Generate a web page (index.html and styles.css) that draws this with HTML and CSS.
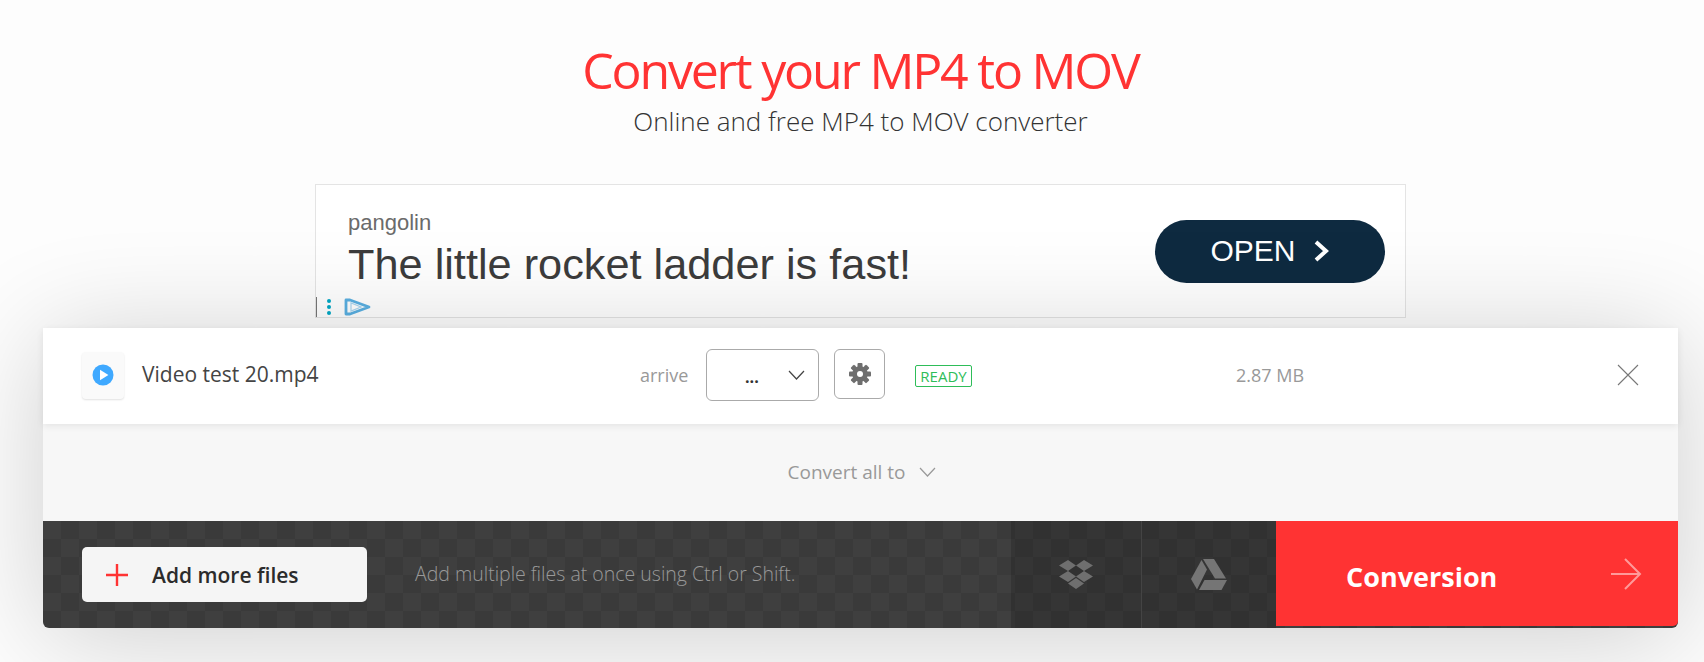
FILE: index.html
```html
<!doctype html>
<html>
  <head>
    <meta charset="UTF-8" />
    <title>Convert your MP4 to MOV</title>
    <link rel="stylesheet" href="styles.css">
  </head>
  <body>
    <div class="page">
      <div class="header">
        <h1>Convert your MP4 to MOV</h1>
        <p>Online and free MP4 to MOV converter</p>
      </div>

      <div class="ad">
        <div class="ad-text">
          <div class="ad-brand">pangolin</div>
          <div class="ad-headline">The little rocket ladder is fast!</div>
        </div>
        <div class="ad-button">
          OPEN
          <svg width="18" height="24" viewBox="0 0 18 24">
            <path d="M3 3l10 9-10 9" transform="translate(1 0)" fill="none" stroke="#fff" stroke-width="4" />
          </svg>
        </div>
        <div class="ad-marker">
          <span class="ad-bar"></span>
          <span class="ad-dots"><i></i><i></i><i></i></span>
          <svg width="28" height="18" viewBox="0 0 28 18">
            <path d="M2 2h4l19 7-19 7H2z" fill="none" stroke="#5ab0e2" stroke-width="2.8" stroke-linejoin="round" />
            <path d="M7 5v8l10-4z" fill="none" stroke="#a9d6f0" stroke-width="1.2" />
          </svg>
        </div>
      </div>

      <div class="panel">
        <div class="file-row">
          <div class="file-info">
            <div class="file-icon">
              <svg width="22" height="22" viewBox="0 0 22 22">
                <circle cx="11" cy="11" r="10.5" fill="#3fa9ff" />
                <path d="M8 5.8v10.4l8.4-5.2z" fill="#fff" />
              </svg>
            </div>
            <span class="file-name">Video test 20.mp4</span>
          </div>
          <span class="file-arrive">arrive</span>
          <div class="select-box">
            <span>...</span>
            <svg width="17" height="10" viewBox="0 0 17 10">
              <path d="M1 1l7.500 8 7.500-8" fill="none" stroke="#444" stroke-width="1.2" />
            </svg>
          </div>
          <div class="gear-btn">
            <svg width="22" height="22" viewBox="0 0 22 22">
              <g fill="#6e6e6e">
                <rect x="8.500" y="0" width="5" height="22" rx="1" />
                <rect x="8.500" y="0" width="5" height="22" rx="1" transform="rotate(45 11 11)" />
                <rect x="8.500" y="0" width="5" height="22" rx="1" transform="rotate(90 11 11)" />
                <rect x="8.500" y="0" width="5" height="22" rx="1" transform="rotate(135 11 11)" />
              </g>
              <circle cx="11" cy="11" r="6" fill="none" stroke="#6e6e6e" stroke-width="3.500" />
              <circle cx="11" cy="11" r="3" fill="#fff" />
            </svg>
          </div>
          <span class="badge">READY</span>
          <span class="file-size">2.87 MB</span>
          <svg class="file-close" width="22" height="22" viewBox="0 0 22 22">
            <path d="M1 1l20 20M21 1L1 21" stroke="#777" stroke-width="1.1" />
          </svg>
        </div>

        <div class="convert-all">
          <span>Convert all to</span>
          <svg width="17" height="10" viewBox="0 0 17 10">
            <path d="M1 1l7.500 8 7.500-8" fill="none" stroke="#999" stroke-width="1.2" />
          </svg>
        </div>

        <div class="action-bar">
          <div class="add-btn">
            <svg width="22" height="22" viewBox="0 0 22 22">
              <path d="M11 0v22M0 11h22" stroke="#ff3333" stroke-width="2.400" />
            </svg>
            <span>Add more files</span>
          </div>
          <span class="hint">Add multiple files at once using Ctrl or Shift.</span>
          <div class="cloud cloud-dropbox">
            <svg width="34" height="29" viewBox="0 0 34 29" fill="#6f6f6f">
              <path d="M9 0l8 5.500-8 5.500-9-5.500zM25 0l9 5.500-9 5.500-8-5.500zM9 11l8 5.500-8 5.500-9-5.500zM25 11l9 5.500-9 5.500-8-5.500zM17 18l8 5.500-8 5.500-8-5.500z" />
            </svg>
          </div>
          <div class="cloud cloud-drive">
            <svg width="36" height="31" viewBox="0 0 36 31" fill="#757575">
              <path d="M12 0h11l12 19.500H24z" />
              <path d="M10.500 1l5.500 9.500L6 30.500 0 20z" />
              <path d="M13.500 21H36l-5.500 10H8z" />
            </svg>
          </div>
          <div class="convert-btn">
            <span>Conversion</span>
            <svg width="31" height="32" viewBox="0 0 31 32">
              <path d="M0 16h29M14 1l15 15-15 15" fill="none" stroke="#ff9a9a" stroke-width="2" />
            </svg>
          </div>
        </div>
      </div>
    </div>
  </body>
</html>
```

FILE: styles.css
```css
body,
html {
  height: 100%;
  margin: 0;
}

body {
  font-family: "Open Sans", sans-serif;
  background-color: #fdfdfd;
  color: #333;
  overflow: hidden;
}

.page {
  padding: 0 26px 0 43px;
}

.header {
  height: 184px;
  text-align: center;
  box-sizing: border-box;
  padding-top: 37px;
}

.header h1 {
  margin: 0;
  font-size: 50px;
  font-weight: 400;
  line-height: 66px;
  letter-spacing: -2.2px;
  color: #ff3333;
}

.header p {
  margin: 0;
  font-size: 26px;
  font-weight: 300;
  line-height: 36px;
  color: #333;
}

/* Ad block */
.ad {
  position: relative;
  width: 1091px;
  height: 134px;
  margin: 0 auto 10px;
  box-sizing: border-box;
  border: 1px solid #e4e4e4;
  background: #fff;
  display: flex;
  align-items: center;
  justify-content: space-between;
  padding: 0 20px 0 32px;
  font-family: "Liberation Sans", Arial, sans-serif;
}

.ad-brand {
  font-size: 22px;
  line-height: 26px;
  color: #6b6b6b;
}

.ad-headline {
  font-size: 43.3px;
  line-height: 56px;
  color: #3c3c3c;
}

.ad-button {
  width: 230px;
  height: 63px;
  border-radius: 32px;
  background: #0e2a40;
  color: #fff;
  font-size: 30px;
  display: flex;
  align-items: center;
  justify-content: center;
  gap: 16px;
}

.ad-marker {
  position: absolute;
  left: 0;
  bottom: 0;
  height: 20px;
  display: flex;
  align-items: center;
}

.ad-bar {
  width: 1px;
  height: 20px;
  background: #777;
}

.ad-dots {
  display: flex;
  flex-direction: column;
  gap: 2px;
  margin: 0 13px 0 10px;
}

.ad-dots i {
  display: block;
  width: 4px;
  height: 4px;
  border-radius: 50%;
  background: #00a8c6;
}

/* Converter panel */
.panel {
  position: relative;
  border-radius: 0 0 6px 6px;
  background: #f7f7f7;
  box-shadow: 0 10px 110px rgba(0, 0, 0, 0.19);
}

.file-row {
  position: relative;
  height: 96px;
  padding: 0 39px 0 39px;
  display: flex;
  align-items: center;
  background: #fff;
  box-shadow: 0 2px 7px rgba(0, 0, 0, 0.08);
}

.file-info {
  width: 558px;
  display: flex;
  align-items: center;
  gap: 18px;
  padding-bottom: 2px;
}

.file-icon {
  width: 42px;
  height: 47px;
  border-radius: 4px;
  background: #fafafa;
  box-shadow: 0 1px 2px rgba(0, 0, 0, 0.12);
  display: flex;
  align-items: center;
  justify-content: center;
}

.file-name {
  margin-bottom: 3px;
  font-size: 21px;
  color: #444;
}

.file-arrive {
  width: 48px;
  margin-right: 18px;
  margin-bottom: 2px;
  font-size: 18px;
  color: #999;
}

.select-box {
  width: 113px;
  height: 52px;
  margin-bottom: 2px;
  box-sizing: border-box;
  border: 1px solid #aaa;
  border-radius: 6px;
  margin-right: 15px;
  padding: 0 13px 0 38px;
  display: flex;
  align-items: center;
  justify-content: space-between;
  font-size: 16px;
  font-weight: 700;
  color: #333;
}

.select-box span {
  padding-top: 4px;
}

.gear-btn {
  width: 51px;
  height: 50px;
  margin-bottom: 4px;
  box-sizing: border-box;
  border: 1px solid #aaa;
  border-radius: 6px;
  margin-right: 30px;
  display: flex;
  align-items: center;
  justify-content: center;
}

.badge {
  width: 57px;
  height: 22px;
  box-sizing: border-box;
  border: 1px solid #2ebd59;
  border-radius: 2px;
  margin-right: 264px;
  font-size: 15px;
  line-height: 20px;
  text-align: center;
  color: #2ebd59;
}

.file-size {
  margin-bottom: 2px;
  font-size: 18px;
  color: #999;
}

.file-close {
  margin-left: auto;
  margin-bottom: 2px;
}

.convert-all {
  height: 95px;
  padding-bottom: 2px;
  display: flex;
  align-items: center;
  justify-content: center;
  gap: 14px;
  padding-left: 3px;
  font-size: 19px;
  color: #999;
}

.action-bar {
  height: 107px;
  border-radius: 0 0 6px 6px;
  padding-left: 39px;
  display: flex;
  align-items: flex-start;
  background-color: #3d3d3d;
  background-image: repeating-conic-gradient(#3a3a3a 0 25%, #3f3f3f 0 50%);
  background-size: 36px 36px;
  color: #fff;
}

.add-btn {
  width: 285px;
  height: 55px;
  margin-top: 26px;
  box-sizing: border-box;
  padding-left: 24px;
  border-radius: 5px;
  background: #f5f5f5;
  display: flex;
  align-items: center;
  gap: 24px;
  font-size: 21px;
  font-weight: 600;
  color: #2b2b2b;
}

.hint {
  margin: 40px 0 0 48px;
  width: 596px;
  font-size: 19.5px;
  font-weight: 300;
  line-height: 26px;
  color: #999;
}

.cloud {
  height: 107px;
  background: rgba(0, 0, 0, 0.15);
  display: flex;
  align-items: center;
  justify-content: center;
  box-sizing: border-box;
}

.cloud-dropbox {
  width: 131px;
  border-right: 1px solid #444;
}

.cloud-drive {
  width: 134px;
}

.convert-btn {
  width: 402px;
  height: 105px;
  border-bottom-right-radius: 5px;
  background: #ff3333;
  box-sizing: border-box;
  padding: 0 36px 0 70px;
  display: flex;
  align-items: center;
  justify-content: space-between;
  font-size: 27px;
  font-weight: 700;
  color: #fff;
}

.convert-btn span {
  padding-top: 6px;
}
```
